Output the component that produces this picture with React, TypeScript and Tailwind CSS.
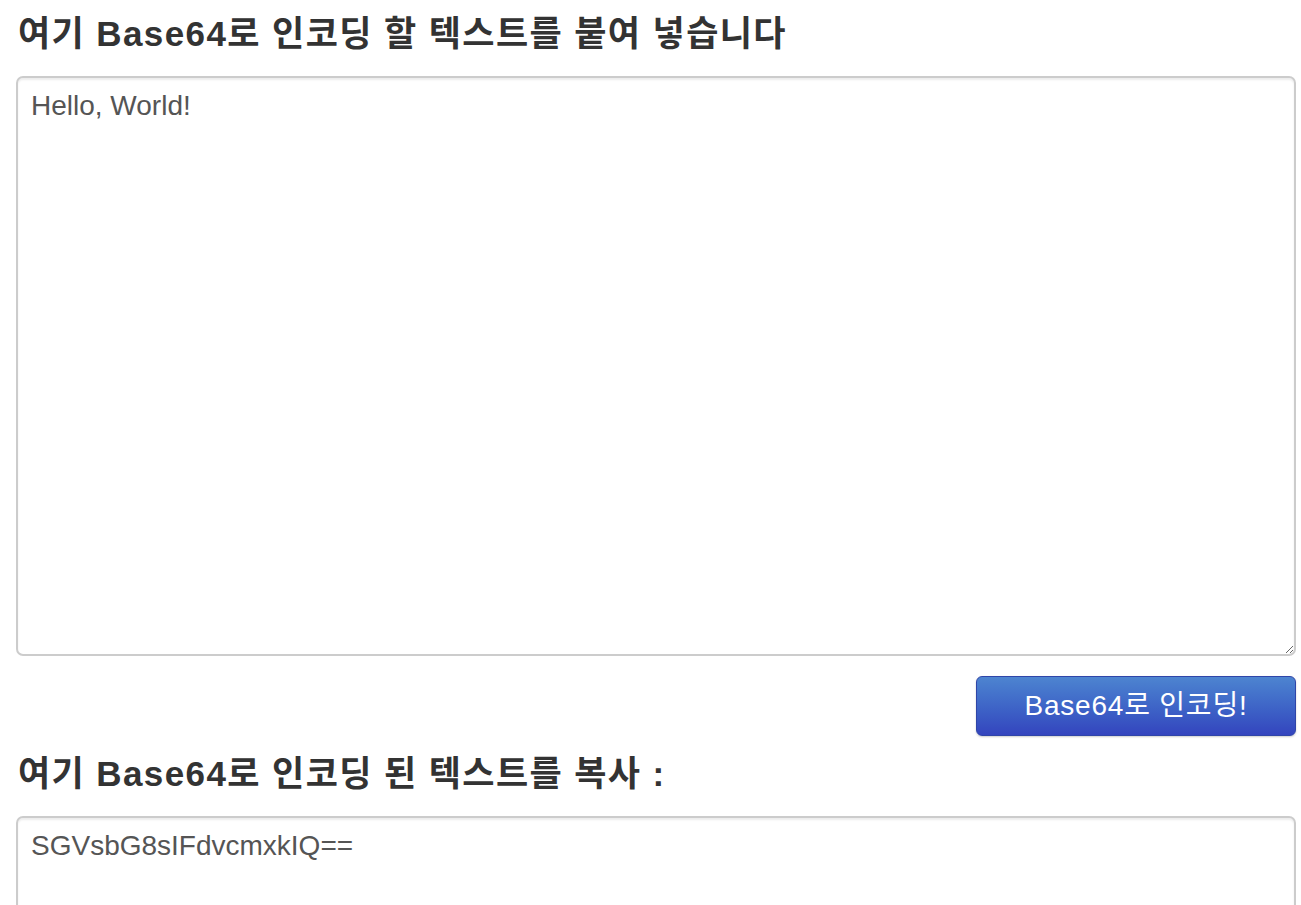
import React from 'react';

const FONT = '"Liberation Sans", "Noto Sans CJK KR", sans-serif';

const fieldClass =
  'block w-full h-[580px] border-2 border-[#ccc] rounded-[7px] px-[13px] pt-[8px] pb-[10px] text-[28px] leading-[40px] text-[#555] shadow-[inset_0_2px_2px_rgba(0,0,0,0.075)] outline-none font-["Liberation_Sans","Noto_Sans_CJK_KR",sans-serif]';

const headingClass =
  'text-[35px] leading-[44px] font-bold text-[#333] pl-[2px] tracking-[1.4px]';

const App: React.FC = () => {
  return (
    <div className="h-screen overflow-hidden pl-4 pr-[5px] pt-[12px] bg-white" style={{ fontFamily: FONT }}>
      <h3 className={`${headingClass} mb-[20px]`}>여기 Base64로 인코딩 할 텍스트를 붙여 넣습니다</h3>
      <textarea defaultValue="Hello, World!" className={fieldClass} />
      <div className="flex justify-end mt-[20px]">
        <button className="w-[320px] h-[60px] rounded-[6px] border border-[#2f45a8] bg-gradient-to-b from-[#4d84d0] to-[#3444be] text-white text-[28px] tracking-[0.8px] shadow-[0_1px_2px_rgba(0,0,0,0.2)] font-['Liberation_Sans','Noto_Sans_CJK_KR',sans-serif]">
          Base64로 인코딩!
        </button>
      </div>
      <h3 className={`${headingClass} mt-[16px] mb-[20px]`}>여기 Base64로 인코딩 된 텍스트를 복사 :</h3>
      <textarea defaultValue="SGVsbG8sIFdvcmxkIQ==" className={fieldClass} />
    </div>
  );
};

export default App;
